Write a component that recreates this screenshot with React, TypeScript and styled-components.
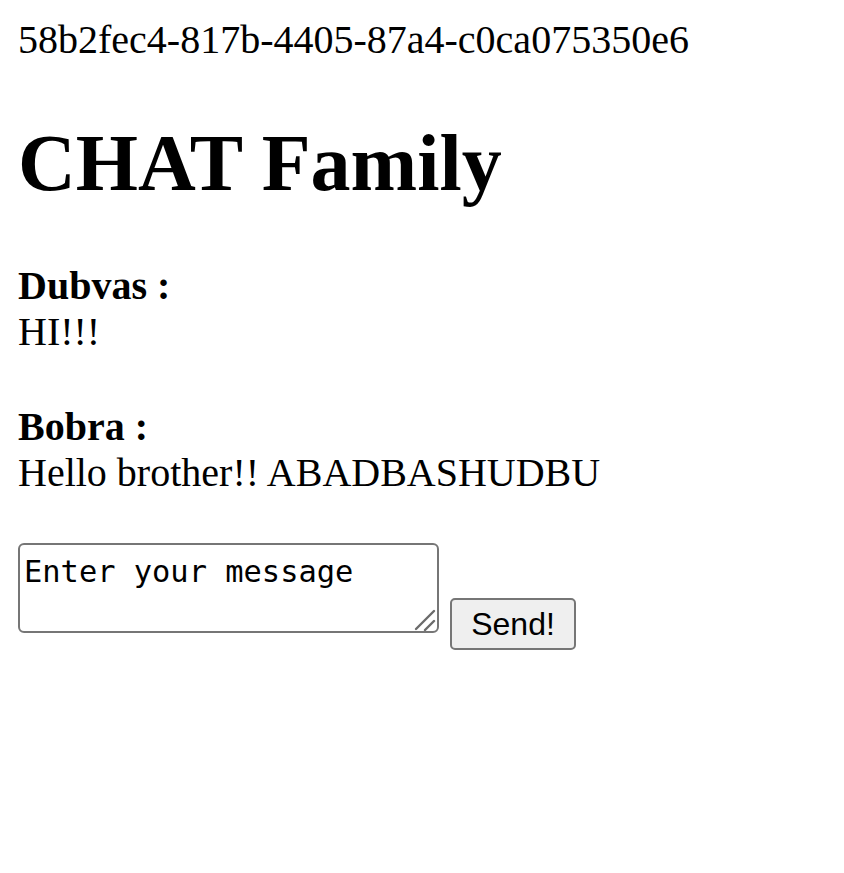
import React from "react";
import styled, { createGlobalStyle } from "styled-components";

const GlobalStyle = createGlobalStyle`
  html, body {
    margin: 0;
    padding: 0;
    background: #ffffff;
  }
  body {
    font-family: "Liberation Serif", "Times New Roman", serif;
    color: #000000;
  }
`;

const Page = styled.div`
  padding: 17px 18px 0 18px;
  display: flex;
  flex-direction: column;
  align-items: flex-start;
`;

const SessionId = styled.div`
  font-size: 40px;
  line-height: 46px;
`;

const Title = styled.h1`
  margin: 54px 0 54px 0;
  font-size: 80px;
  line-height: 92px;
  font-weight: 700;
`;

const MessageList = styled.div`
  display: flex;
  flex-direction: column;
  gap: 49px;
`;

const Message = styled.div`
  display: flex;
  flex-direction: column;
  font-size: 40px;
  line-height: 46px;
`;

const Author = styled.b`
  font-weight: 700;
`;

const Body = styled.span``;

const Composer = styled.div`
  margin-top: 47px;
  display: flex;
  align-items: flex-start;
  gap: 11px;
`;

const InputWrap = styled.div`
  position: relative;
  width: 421px;
  height: 90px;
`;

const Input = styled.textarea`
  box-sizing: border-box;
  width: 421px;
  height: 90px;
  margin: 0;
  padding: 9px 4px 4px 4px;
  border: 2px solid #767676;
  border-radius: 6px;
  font-family: "DejaVu Sans Mono", "Liberation Mono", monospace;
  font-size: 30.4px;
  line-height: 35px;
  color: #000;
  background: #fff;
  resize: none;
  outline: none;
  overflow: hidden;
  &::placeholder {
    color: #000;
    opacity: 1;
  }
`;

const Grip = styled.svg`
  position: absolute;
  right: 3px;
  bottom: 2px;
  width: 22px;
  height: 22px;
  pointer-events: none;
`;

const SendButton = styled.button`
  box-sizing: border-box;
  margin-top: 55px;
  width: 126px;
  height: 52px;
  padding: 0;
  border: 2px solid #767676;
  border-radius: 5px;
  background: #efefef;
  font-family: "Liberation Sans", Arial, sans-serif;
  font-size: 32px;
  line-height: 1;
  color: #000;
  cursor: pointer;
`;

const messages = [
  { author: "Dubvas", text: "HI!!!" },
  { author: "Bobra", text: "Hello brother!! ABADBASHUDBU" },
];

export default function App() {
  return (
    <>
      <GlobalStyle />
      <Page>
        <SessionId>58b2fec4-817b-4405-87a4-c0ca075350e6</SessionId>
        <Title>CHAT Family</Title>
        <MessageList>
          {messages.map((m) => (
            <Message key={m.author}>
              <Author>{m.author} :</Author>
              <Body>{m.text}</Body>
            </Message>
          ))}
        </MessageList>
        <Composer>
          <InputWrap>
            <Input placeholder="Enter your message" />
            <Grip viewBox="0 0 22 22">
              <line x1="2" y1="20" x2="20" y2="2" stroke="#6b6b6b" strokeWidth="2.4" strokeLinecap="round" />
              <line x1="11" y1="21" x2="20" y2="12" stroke="#6b6b6b" strokeWidth="2.4" strokeLinecap="round" />
            </Grip>
          </InputWrap>
          <SendButton>Send!</SendButton>
        </Composer>
      </Page>
    </>
  );
}
